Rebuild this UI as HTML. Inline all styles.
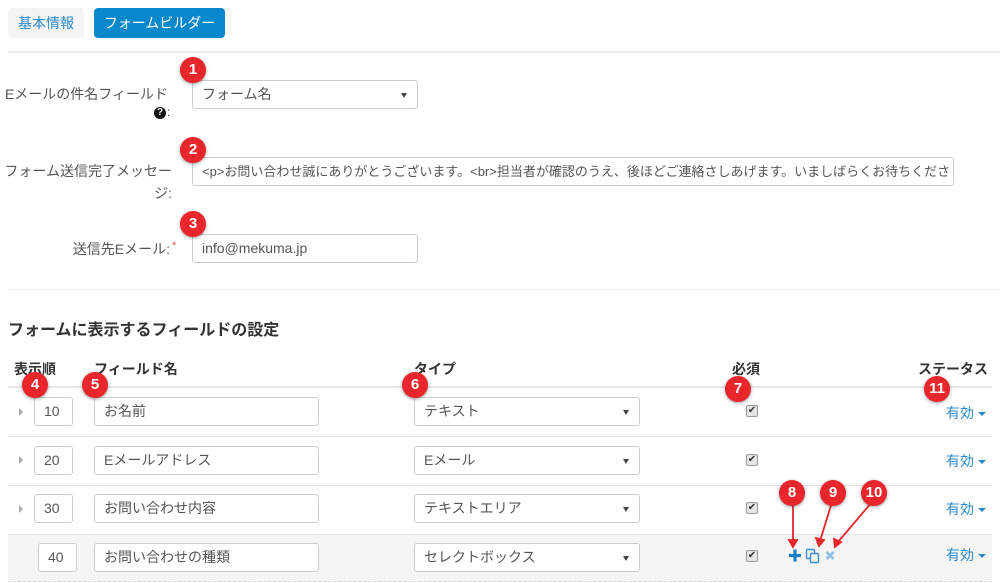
<!DOCTYPE html>
<html><head><meta charset="utf-8"><style>
*{box-sizing:border-box;margin:0;padding:0}
body{width:1000px;height:583px;overflow:hidden;background:#fff;font-family:"Liberation Sans","Noto Sans CJK JP",sans-serif;font-size:14px;color:#444;position:relative}
.a{position:absolute}
.tab{position:absolute;top:8px;height:30px;border-radius:4px;line-height:30px;text-align:center;font-size:14px}
.hr{position:absolute;left:8px;right:0;height:2px;background:#eee}
.inp{position:absolute;height:29px;border:1px solid #ccc;border-radius:3px;background:#fff;padding-left:9px;line-height:27px;font-size:14px;color:#555;white-space:nowrap;overflow:hidden}
.sel::after{content:"";position:absolute;right:10px;top:12px;border-left:3px solid transparent;border-right:3px solid transparent;border-top:5px solid #444}
.lbl{position:absolute;text-align:right;font-size:14px;color:#555}
.b{position:absolute;width:26px;height:26px;border-radius:50%;background:#e8262b;color:#fff;font-weight:bold;font-size:15px;text-align:center;line-height:26px;box-shadow:0 1px 3px rgba(0,0,0,.4);z-index:5;font-family:"Liberation Sans",sans-serif}
.th{position:absolute;top:359px;font-weight:bold;font-size:14px;color:#333}
.line{position:absolute;left:8px;width:984px;height:1px;background:#e2e2e2}
.tri{position:absolute;left:19px;border-top:4px solid transparent;border-bottom:4px solid transparent;border-left:4px solid #aaa}
.cb{position:absolute;left:746px;width:12px;height:12px;border:1px solid #999;background:#e4e4e4;border-radius:2px;font-size:10px;line-height:10px;text-align:center;color:#333}
.st{position:absolute;left:946px;color:#2a8ad0;font-size:14px}
.st::after{content:"";display:inline-block;margin-left:4px;vertical-align:middle;border-left:4px solid transparent;border-right:4px solid transparent;border-top:4px solid #2a8ad0}
</style></head><body>
<div class="tab" style="left:8px;width:76px;background:#f4f4f4;color:#2a8ad0">基本情報</div>
<div class="tab" style="left:94px;width:131px;background:#0a88cc;color:#fff">フォームビルダー</div>
<div class="hr" style="top:51px"></div>

<div class="lbl" style="left:0;width:168px;top:84px">Eメールの件名フィールド</div>
<div class="a" style="left:154px;top:107px;width:12px;height:12px;border-radius:50%;background:#111;color:#fff;font-size:10px;font-weight:bold;text-align:center;line-height:12px">?</div>
<div class="a" style="left:167px;top:105px;font-size:12px">:</div>
<div class="inp sel" style="left:192px;top:80px;width:226px">フォーム名</div>
<div class="b" style="left:180px;top:57px">1</div>

<div class="lbl" style="left:0;width:172px;top:161px">フォーム送信完了メッセー</div>
<div class="lbl" style="left:0;width:172px;top:183px">ジ:</div>
<div class="inp" style="left:192px;top:157px;width:762px;font-size:13px">&lt;p&gt;お問い合わせ誠にありがとうございます。&lt;br&gt;担当者が確認のうえ、後ほどご連絡さしあげます。いましばらくお待ちくださ</div>
<div class="b" style="left:180px;top:137px">2</div>

<div class="lbl" style="left:0;width:170px;top:239px">送信先Eメール:</div>
<div class="a" style="left:172px;top:240px;color:#d9534f;font-size:11px">*</div>
<div class="inp" style="left:192px;top:234px;width:226px">info@mekuma.jp</div>
<div class="b" style="left:180px;top:211px">3</div>

<div class="hr" style="top:289px;height:1px"></div>
<div class="a" style="left:8px;top:316px;font-size:16px;font-weight:bold;color:#333">フォームに表示するフィールドの設定</div>

<div class="th" style="left:14px">表示順</div>
<div class="th" style="left:94px">フィールド名</div>
<div class="th" style="left:414px">タイプ</div>
<div class="th" style="left:732px">必須</div>
<div class="th" style="left:918px">ステータス</div>
<div class="line" style="top:386px;height:2px;background:#e6e6e6"></div>

<div class="line" style="top:436px"></div>
<div class="line" style="top:485px"></div>
<div class="a" style="left:8px;top:534px;width:984px;height:48px;background:#f5f5f5;border-top:1px solid #e2e2e2;border-bottom:1px dashed #ddd"></div>

<div class="tri" style="top:408px"></div>
<div class="inp" style="left:34px;top:397px;width:39px">10</div>
<div class="inp" style="left:94px;top:397px;width:225px">お名前</div>
<div class="inp sel" style="left:414px;top:397px;width:226px">テキスト</div>
<div class="cb" style="top:405px">✔</div>
<div class="st" style="top:403px">有効</div>

<div class="tri" style="top:456px"></div>
<div class="inp" style="left:34px;top:446px;width:39px">20</div>
<div class="inp" style="left:94px;top:446px;width:225px">Eメールアドレス</div>
<div class="inp sel" style="left:414px;top:446px;width:226px">Eメール</div>
<div class="cb" style="top:454px">✔</div>
<div class="st" style="top:451px">有効</div>

<div class="tri" style="top:505px"></div>
<div class="inp" style="left:34px;top:494px;width:39px">30</div>
<div class="inp" style="left:94px;top:494px;width:225px">お問い合わせ内容</div>
<div class="inp sel" style="left:414px;top:494px;width:226px">テキストエリア</div>
<div class="cb" style="top:502px">✔</div>
<div class="st" style="top:499px">有効</div>

<div class="inp" style="left:38px;top:543px;width:39px">40</div>
<div class="inp" style="left:94px;top:543px;width:225px">お問い合わせの種類</div>
<div class="inp sel" style="left:414px;top:543px;width:226px">セレクトボックス</div>
<div class="cb" style="top:550px">✔</div>
<div class="st" style="top:545px">有効</div>

<svg class="a" style="left:780px;top:540px" width="60" height="30" viewBox="0 0 60 30">
<path d="M15 9.5v12M9 15.5h12" stroke="#1a7fc4" stroke-width="3.2"/>
<rect x="26.5" y="9.5" width="8" height="9" rx="1" fill="none" stroke="#3a90d0" stroke-width="1.4"/>
<rect x="30.5" y="13.5" width="8" height="9" rx="1" fill="#f5f5f5" stroke="#3a90d0" stroke-width="1.4"/>
<path d="M46.5 12l7 7M53.5 12l-7 7" stroke="#8fc0e6" stroke-width="2.8"/>
</svg>
<svg class="a" style="left:780px;top:500px;z-index:4" width="100" height="50">
<g stroke="#e8262b" stroke-width="1.8" fill="#e8262b">
<path d="M13 2V42" fill="none"/><path d="M9 40l4 7 4-7z"/>
<path d="M52 2L40 41" fill="none"/><path d="M36 38l3 8 5-6z"/>
<path d="M92 2L58 42" fill="none"/><path d="M54 39l1 8 6-5z"/>
</g></svg>

<div class="b" style="left:22px;top:372px">4</div>
<div class="b" style="left:82px;top:372px">5</div>
<div class="b" style="left:402px;top:372px">6</div>
<div class="b" style="left:725px;top:376px">7</div>
<div class="b" style="left:924px;top:376px">11</div>
<div class="b" style="left:779px;top:480px">8</div>
<div class="b" style="left:820px;top:480px">9</div>
<div class="b" style="left:861px;top:480px">10</div>
</body></html>
